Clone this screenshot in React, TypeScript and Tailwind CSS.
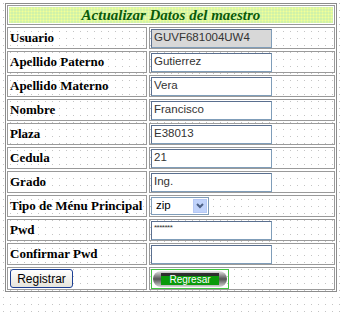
import React from 'react';

const dots = 'bg-[radial-gradient(circle,#c4c4c4_0.8px,transparent_1px)] bg-[length:7px_7px]';

const rows: { label: string; value?: string; kind?: 'text' | 'readonly' | 'select' | 'pwd' }[] = [
  { label: 'Usuario', value: 'GUVF681004UW4', kind: 'readonly' },
  { label: 'Apellido Paterno', value: 'Gutierrez' },
  { label: 'Apellido Materno', value: 'Vera' },
  { label: 'Nombre', value: 'Francisco' },
  { label: 'Plaza', value: 'E38013' },
  { label: 'Cedula', value: '21' },
  { label: 'Grado', value: 'Ing.' },
  { label: 'Tipo de Ménu Principal', value: 'zip', kind: 'select' },
  { label: 'Pwd', value: '*******', kind: 'pwd' },
  { label: 'Confirmar Pwd', value: '' },
];

const Cell: React.FC<{ children?: React.ReactNode; className?: string }> = ({ children, className = '' }) => (
  <div className={`h-[22px] border border-[#9a9a9a] flex items-center ${className}`}>{children}</div>
);

const Field: React.FC<{ value?: string; kind?: string }> = ({ value, kind }) => {
  if (kind === 'select') {
    return (
      <div className="ml-[1px] w-[58px] h-[18px] border border-[#7f9db9] bg-white flex items-center justify-between pl-[4px] pr-[1px] text-[11.5px] text-black">
        <span>{value}</span>
        <div className="w-[14px] h-[14px] bg-[#c1d3fb] border border-[#b5c8f5] flex items-center justify-center">
          <svg width="8" height="6" viewBox="0 0 8 6">
            <path d="M1 1 L4 4 L7 1" stroke="#4d6185" strokeWidth="2" fill="none" />
          </svg>
        </div>
      </div>
    );
  }
  const bg = kind === 'readonly' ? 'bg-[#d8d8d8]' : 'bg-white';
  return (
    <div
      className={`ml-[1px] w-[121px] h-[19px] border border-[#7f9db9] border-t-[#5a6f8f] border-l-[#5a6f8f] ${bg} flex items-center pl-[2px] text-[11.5px] text-[#333]`}
    >
      {kind === 'pwd' ? <span className="text-[8px] tracking-[-0.5px] -mt-[5px]">{value}</span> : value}
    </div>
  );
};

export default function App() {
  return (
    <div className={`w-[345px] h-[313px] bg-white ${dots} pt-[3px] pl-[5px] font-['Liberation_Sans',Arial,sans-serif]`}>
      <div className="w-[332px] border border-[#8c8c8c] p-[1px] flex flex-col gap-[2px]">
        <div className="h-[20px] border border-[#9a9a9a] p-[1px]">
          <div className="h-full bg-[#d0f2a8] bg-[radial-gradient(circle,#f2ff98_0.9px,transparent_1.1px)] bg-[length:3px_3px] flex items-center justify-center font-['Liberation_Serif',serif] italic font-bold text-[15px] text-[#0a5a0a]">
            Actualizar Datos del maestro
          </div>
        </div>
        {rows.map((r) => (
          <div key={r.label} className="grid grid-cols-[140px_1fr] gap-[2px]">
            <Cell className="pl-[2px] font-['Liberation_Serif',serif] font-bold text-[13px] text-black">{r.label}</Cell>
            <Cell>
              <Field value={r.value} kind={r.kind} />
            </Cell>
          </div>
        ))}
        <div className="grid grid-cols-[140px_1fr] gap-[2px]">
          <Cell className="h-[23px] pl-[2px]">
            <button className="w-[63px] h-[19px] rounded-[3px] border border-[#1c3f94] bg-gradient-to-b from-white to-[#e6e5dc] text-[12px] text-black leading-none">
              Registrar
            </button>
          </Cell>
          <Cell className="h-[23px]">
            <div className="ml-[1px] w-[78px] h-[20px] border border-[#3fc43f] p-[1px]">
              <div className="relative h-full rounded-full bg-gradient-to-b from-[#e8e8e8] via-[#555] to-[#d8d8d8] flex items-center px-[8px]">
                <div className="flex-1 h-[12px] bg-[#0a9a0a] border-t-[3px] border-[#2e2e2e] flex items-center justify-center text-white text-[10px] leading-none">
                  Regresar
                </div>
              </div>
            </div>
          </Cell>
        </div>
      </div>
    </div>
  );
}
